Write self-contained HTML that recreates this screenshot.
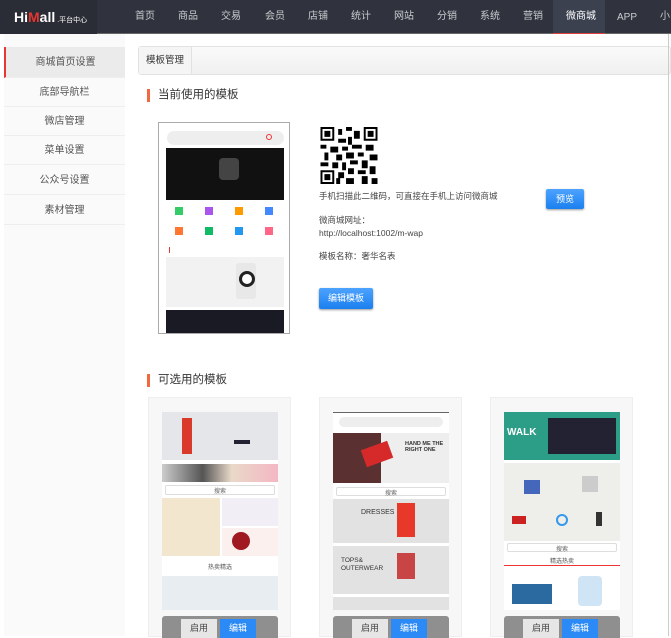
<!DOCTYPE html>
<html><head><meta charset="utf-8"><style>
*{margin:0;padding:0;box-sizing:border-box}
body{width:671px;height:636px;overflow:hidden;background:#fff;font-family:"Liberation Sans","Noto Sans CJK SC",sans-serif;font-size:10px;color:#333;position:relative}
.abs{position:absolute}
.nav{left:0;top:0;width:671px;height:34px;background:#30333d;border-bottom:1px solid #666}
.logo{left:0;top:0;width:97px;height:34px;background:#2a2d36}
.nav span{position:absolute;top:9px;color:#c9cbd0;font-size:10px;line-height:16px}
.side{left:4px;top:34px;width:121px;height:602px;background:#fafafa}
.si{position:absolute;left:4px;width:121px;height:29px;line-height:29px;text-align:center;color:#555;font-size:10px;border-bottom:1px solid #eee}
.btn{position:absolute;background:linear-gradient(#4da3ff,#1a7fef);color:#fff;text-align:center;border-radius:2px;font-size:9px;box-shadow:0 1px 2px #999}
.h{position:absolute;font-size:11.5px;color:#333;padding-left:8px;border-left:3px solid #f2683f;line-height:13px}
.card{position:absolute;top:397px;width:143px;height:240px;background:#f7f7f7;border:1px solid #eee}
.bar{position:absolute;left:13px;top:218px;width:116px;height:22px;background:#8f8f8f;border-radius:3px 3px 0 0}
.b1{position:absolute;left:19px;top:3px;width:36px;height:19px;background:#e6e6e6;text-align:center;line-height:19px;color:#444;font-size:9px}
.b2{position:absolute;left:58px;top:3px;width:36px;height:19px;background:#2b8af5;text-align:center;line-height:19px;color:#fff;font-size:9px}
.img{position:absolute;left:13px;top:14px;width:116px;height:198px;background:#eee;overflow:hidden}
</style></head><body>
<div class="abs nav">
<div class="abs logo"></div>
<div class="abs" style="left:14px;top:9px;color:#fff;font-weight:bold;font-size:14px">Hi<span style="position:static;color:#e8352f;font-size:14px;line-height:normal">M</span>all<span style="position:static;font-size:7px;color:#fff;font-weight:normal;line-height:normal"> .平台中心</span></div>
<span style="left:135px">首页</span><span style="left:178px">商品</span><span style="left:221px">交易</span><span style="left:265px">会员</span><span style="left:308px">店铺</span><span style="left:351px">统计</span><span style="left:394px">网站</span><span style="left:437px">分销</span><span style="left:480px">系统</span><span style="left:523px">营销</span>
<div class="abs" style="left:553px;top:0;width:52px;height:34px;background:#3c4150;border-bottom:1px solid #e04040"></div>
<span style="left:566px;color:#fff">微商城</span><span style="left:617px;top:10px">APP</span><span style="left:660px">小</span>
</div>
<div class="abs side"></div>
<div class="si" style="top:47px;height:31px;line-height:31px;background:#ebebeb;border-left:2px solid #e8352f">商城首页设置</div>
<div class="si" style="top:78px">底部导航栏</div>
<div class="si" style="top:107px">微店管理</div>
<div class="si" style="top:136px">菜单设置</div>
<div class="si" style="top:166px">公众号设置</div>
<div class="si" style="top:196px">素材管理</div>
<div class="abs" style="left:138px;top:46px;width:533px;height:29px;background:linear-gradient(#fafafa,#f0f0f0);border:1px solid #e2e2e2;border-radius:3px"></div>
<div class="abs" style="left:139px;top:47px;width:53px;height:27px;background:#f5f5f5;border-right:1px solid #e2e2e2;line-height:27px;text-align:center;font-size:9.5px">模板管理</div>
<div class="h" style="left:147px;top:89px">当前使用的模板</div>
<div class="abs" style="left:158px;top:122px;width:132px;height:212px;border:1px solid #aaa;background:#fff;overflow:hidden">
 <div class="abs" style="left:8px;top:8px;width:117px;height:14px;background:#eee;border-radius:7px"></div>
 <div class="abs" style="left:107px;top:11px;width:6px;height:6px;border:1.5px solid #e33;border-radius:50%"></div>
 <div class="abs" style="left:7px;top:25px;width:118px;height:52px;background:#111"></div>
 <div class="abs" style="left:60px;top:35px;width:20px;height:22px;background:#444;border-radius:4px"></div>
 <div class="abs" style="left:7px;top:78px;width:118px;height:65px;background:#fff"></div>
 <div class="abs" style="left:16px;top:84px;width:8px;height:8px;background:#3c6"></div><div class="abs" style="left:46px;top:84px;width:8px;height:8px;background:#a5e"></div><div class="abs" style="left:76px;top:84px;width:8px;height:8px;background:#f90"></div><div class="abs" style="left:106px;top:84px;width:8px;height:8px;background:#48f"></div>
 <div class="abs" style="left:16px;top:104px;width:8px;height:8px;background:#f73"></div><div class="abs" style="left:46px;top:104px;width:8px;height:8px;background:#1b6"></div><div class="abs" style="left:76px;top:104px;width:8px;height:8px;background:#29e"></div><div class="abs" style="left:106px;top:104px;width:8px;height:8px;background:#f68"></div>
 <div class="abs" style="left:10px;top:124px;width:1px;height:6px;background:#e33"></div>
 <div class="abs" style="left:7px;top:134px;width:118px;height:50px;background:#f2f2f2"></div>
 <div class="abs" style="left:77px;top:140px;width:20px;height:36px;background:#e8e8e8;border-radius:3px"></div>
 <div class="abs" style="left:80px;top:148px;width:16px;height:16px;border:3px solid #222;border-radius:50%;background:#fff"></div>
 <div class="abs" style="left:7px;top:187px;width:118px;height:30px;background:#1a1a24"></div>
</div>
<svg class="abs" style="left:320px;top:127px" width="58" height="57" viewBox="0 0 29 29"><rect width="29" height="29" fill="#fff"/><g fill="#000"><path d="M0 0h7v7H0zM22 0h7v7h-7zM0 22h7v7H0z"/></g><g fill="#fff"><path d="M1 1h5v5H1zM23 1h5v5h-5zM1 23h5v5H1z"/></g><g fill="#000"><path d="M2 2h3v3H2zM24 2h3v3h-3zM2 24h3v3H2zM9 1h2v3H9zM13 0h3v2h-3zM17 2h3v4h-3zM9 6h4v2H9zM14 5h2v4h-2zM0 9h3v2H0zM5 10h4v3H5zM11 10h3v2h-3zM16 9h5v2h-5zM23 9h4v3h-4zM2 13h2v4H2zM8 14h3v3H8zM13 13h4v3h-4zM19 13h3v2h-3zM25 14h4v3h-4zM0 18h4v2H0zM6 18h3v3H6zM11 18h2v4h-2zM15 17h4v2h-4zM21 17h3v4h-3zM9 23h3v3H9zM14 21h3v3h-3zM19 22h4v2h-4zM25 20h3v4h-3zM13 26h4v3h-4zM21 25h3v4h-3zM26 26h3v3h-3zM8 26h2v3H8z"/></g></svg>
<div class="abs" style="left:319px;top:190px;font-size:8.5px;color:#444">手机扫描此二维码，可直接在手机上访问微商城</div>
<div class="btn" style="left:546px;top:189px;width:38px;height:20px;line-height:20px">预览</div>
<div class="abs" style="left:319px;top:214px;font-size:8.5px;color:#444;line-height:13px">微商城网址：<br>http://localhost:1002/m-wap</div>
<div class="abs" style="left:319px;top:250px;font-size:8.5px;color:#444">模板名称：奢华名表</div>
<div class="btn" style="left:319px;top:288px;width:54px;height:21px;line-height:21px">编辑模板</div>
<div class="h" style="left:147px;top:374px">可选用的模板</div>
<div class="card" style="left:148px"><div class="img" style="background:#fff">
 <div class="abs" style="left:0;top:0;width:116px;height:48px;background:#e4e6ea"></div>
 <div class="abs" style="left:20px;top:6px;width:10px;height:36px;background:#d93a2c"></div>
 <div class="abs" style="left:72px;top:28px;width:16px;height:4px;background:#223"></div>
 <div class="abs" style="left:0;top:52px;width:116px;height:18px;background:linear-gradient(90deg,#ccc,#555 35%,#e9d9c9 60%,#f4b7c4)"></div>
 <div class="abs" style="left:3px;top:73px;width:110px;height:10px;border:1px solid #ddd;border-radius:2px;font-size:6px;text-align:center;color:#666">搜索</div>
 <div class="abs" style="left:0;top:86px;width:58px;height:58px;background:#f2e6cf"></div>
 <div class="abs" style="left:60px;top:86px;width:56px;height:28px;background:#f2eef6"></div>
 <div class="abs" style="left:60px;top:116px;width:56px;height:28px;background:#fbf0ee"></div>
 <div class="abs" style="left:70px;top:120px;width:18px;height:18px;background:#a01820;border-radius:50%"></div>
 <div class="abs" style="left:0;top:150px;width:116px;height:11px;font-size:6px;text-align:center;color:#555">热卖精选</div>
 <div class="abs" style="left:0;top:164px;width:116px;height:34px;background:#e8edf2"></div>
</div><div class="bar"><div class="b1">启用</div><div class="b2">编辑</div></div></div>
<div class="card" style="left:319px"><div class="img" style="background:#fff;border-top:1px solid #666">
 <div class="abs" style="left:6px;top:4px;width:104px;height:10px;background:#eee;border-radius:5px"></div>
 <div class="abs" style="left:0;top:20px;width:116px;height:50px;background:#eee"></div>
 <div class="abs" style="left:0;top:20px;width:48px;height:50px;background:#5a3030"></div>
 <div class="abs" style="left:30px;top:32px;width:28px;height:18px;background:#d62a2a;transform:rotate(-20deg)"></div>
 <div class="abs" style="left:72px;top:28px;font-size:5.5px;font-weight:bold">HAND ME THE<br>RIGHT ONE</div>
 <div class="abs" style="left:3px;top:74px;width:110px;height:9px;border:1px solid #ddd;border-radius:2px;font-size:6px;text-align:center;color:#666">搜索</div>
 <div class="abs" style="left:0;top:86px;width:116px;height:44px;background:#e2e2e2"></div>
 <div class="abs" style="left:28px;top:96px;font-size:7px">DRESSES</div>
 <div class="abs" style="left:64px;top:90px;width:18px;height:34px;background:#e8382a"></div>
 <div class="abs" style="left:0;top:133px;width:116px;height:48px;background:#e2e2e2"></div>
 <div class="abs" style="left:8px;top:144px;font-size:6.5px;line-height:8px">TOPS&amp;<br>OUTERWEAR</div>
 <div class="abs" style="left:64px;top:140px;width:18px;height:26px;background:#c94545"></div>
 <div class="abs" style="left:0;top:184px;width:116px;height:14px;background:#e2e2e2"></div>
</div><div class="bar"><div class="b1">启用</div><div class="b2">编辑</div></div></div>
<div class="card" style="left:490px"><div class="img" style="background:#fff">
 <div class="abs" style="left:0;top:0;width:116px;height:48px;background:#2c9e87"></div>
 <div class="abs" style="left:3px;top:15px;color:#fff;font-weight:bold;font-size:10px">WALK</div>
 <div class="abs" style="left:44px;top:6px;width:68px;height:36px;background:#223"></div>
 <div class="abs" style="left:0;top:51px;width:116px;height:78px;background:#eeeeea"></div>
 <div class="abs" style="left:20px;top:68px;width:16px;height:14px;background:#4466bb"></div>
 <div class="abs" style="left:78px;top:64px;width:16px;height:16px;background:#ccc"></div>
 <div class="abs" style="left:8px;top:104px;width:14px;height:8px;background:#c22"></div>
 <div class="abs" style="left:52px;top:102px;width:12px;height:12px;border:2px solid #39e;border-radius:50%"></div>
 <div class="abs" style="left:92px;top:100px;width:6px;height:14px;background:#333"></div>
 <div class="abs" style="left:3px;top:131px;width:110px;height:9px;border:1px solid #ddd;border-radius:2px;font-size:6px;text-align:center;color:#666">搜索</div>
 <div class="abs" style="left:0;top:144px;width:116px;height:10px;font-size:6px;text-align:center;color:#555;border-bottom:1px solid #e33">精选热卖</div>
 <div class="abs" style="left:8px;top:172px;width:40px;height:20px;background:#2a6aa0"></div>
 <div class="abs" style="left:74px;top:164px;width:24px;height:30px;background:#cfe4f4;border-radius:4px"></div>
</div><div class="bar"><div class="b1">启用</div><div class="b2">编辑</div></div></div>
<div class="abs" style="left:668px;top:34px;width:1px;height:602px;background:#ccc"></div>
</body></html>
